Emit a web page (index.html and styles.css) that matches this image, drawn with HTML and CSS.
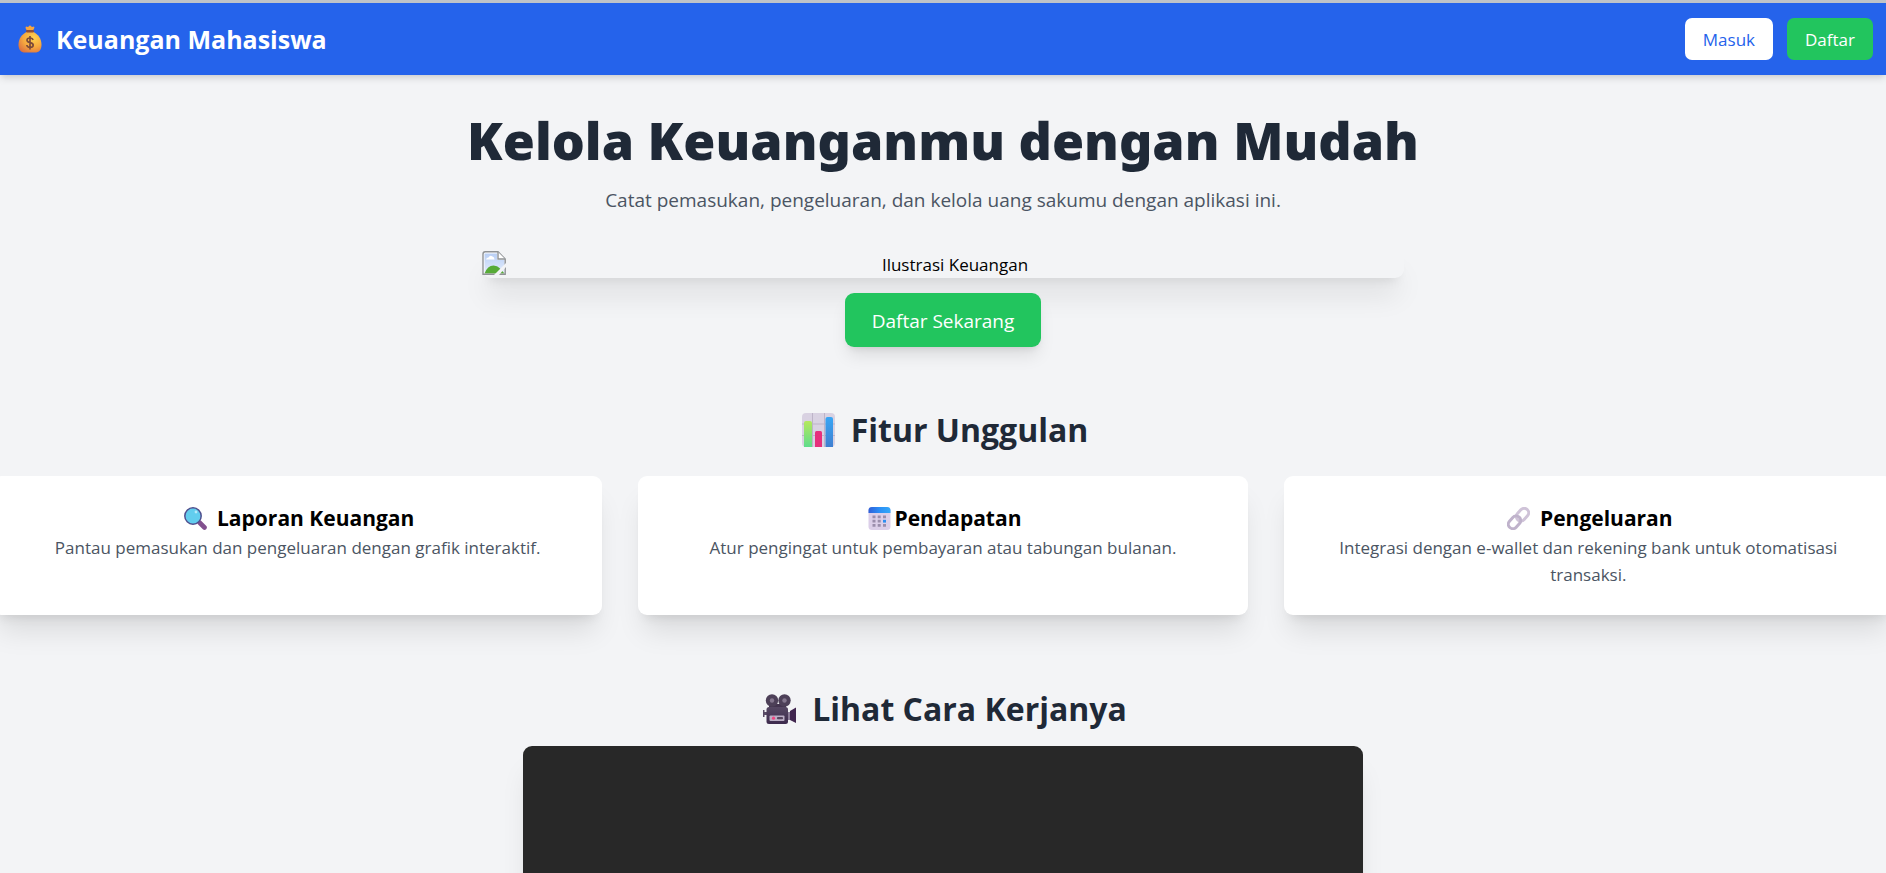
FILE: index.html
```html
<!DOCTYPE html>
<html lang="id">
<head>
<meta charset="utf-8">
<meta name="viewport" content="width=device-width, initial-scale=1">
<title>Keuangan Mahasiswa</title>
<link rel="stylesheet" href="styles.css">
</head>
<body>
<nav class="navbar">
  <p class="brand">
    <svg class="icon-brand" viewBox="0 0 24 28" aria-hidden="true">
      <defs><radialGradient id="bag" cx=".65" cy=".3" r=".8"><stop offset="0" stop-color="#ffd34f"/><stop offset=".55" stop-color="#f7a93f"/><stop offset="1" stop-color="#dc7141"/></radialGradient></defs>
      <path d="M8 1.500 10 2l2-1.700L14 2l2-.5c.8.8.3 2-.8 3.500L14.500 7h-5L8.700 5C7.500 3.500 7.200 2.200 8 1.500z" fill="#f6a640"/>
      <path d="M9 6.800C4 9 .5 14 .5 19.500c0 5.500 2.500 8 6.500 8h10c4 0 6.500-2.500 6.500-8C23.500 14 20 9 15 6.800z" fill="url(#bag)"/>
      <rect x="8" y="5" width="8" height="2.400" rx="1.200" fill="#8d4f3c"/>
      <path d="M15 15c-.3-1.500-1.500-2-3-2s-3 .7-3 2.300c0 3.200 6.200 1.500 6.200 4.700 0 1.600-1.500 2.400-3.200 2.400S9 21.500 8.800 20M12 11v13.500" fill="none" stroke="#7c4a3a" stroke-width="1.700"/>
    </svg>
    Keuangan Mahasiswa
  </p>
  <div class="nav-actions">
    <a class="btn btn-light" href="#masuk">Masuk</a>
    <a class="btn btn-green" href="#daftar">Daftar</a>
  </div>
</nav>

<main>
  <section class="hero">
    <h1>Kelola Keuanganmu dengan Mudah</h1>
    <p class="lead">Catat pemasukan, pengeluaran, dan kelola uang sakumu dengan aplikasi ini.</p>
    <div class="illustration">
      <svg class="icon-broken" viewBox="0 0 24 24" aria-hidden="true">
        <defs><linearGradient id="sky" x1="0" y1="0" x2="0" y2="1"><stop offset="0" stop-color="#b9cff5"/><stop offset="1" stop-color="#e3ecfc"/></linearGradient></defs>
        <path d="M1 23V3q0-2 2-2h13l7 7v15z" fill="#fff"/>
        <path d="M2.500 22V2.500H15V9h7.500v13z" fill="url(#sky)"/>
        <path d="M4 8.500q.5-2 2.500-2Q8 3.500 10.500 5.500q2 .5 2 3z" fill="#fff"/>
        <path d="M2.500 22.500q3-8 9-8 4 0 6 2.500l5 5.500z" fill="#57ab37"/>
        <path d="M12 23.200H1V3q0-2.200 2.200-2.200H16L23.200 8v15.200H12" fill="none" stroke="#8f9295" stroke-width="1.400"/>
        <path d="M16 1v7h7" fill="#fff" stroke="#8f9295" stroke-width="1.400"/>
        <path d="M12 24 24 12v4l-7 8z" fill="#f3f4f6"/>
      </svg>
      <span class="illustration-text">Ilustrasi Keuangan</span>
    </div>
    <a class="btn-cta" href="#daftar">Daftar Sekarang</a>
  </section>

  <section class="features">
    <h2>
      <svg class="icon-title" viewBox="0 0 33 34" aria-hidden="true">
        <defs>
          <linearGradient id="g1" x1="0" y1="0" x2="0" y2="1"><stop offset="0" stop-color="#b5e85c"/><stop offset="1" stop-color="#5fdc8c"/></linearGradient>
          <linearGradient id="g2" x1="0" y1="0" x2="0" y2="1"><stop offset="0" stop-color="#38a6f5"/><stop offset="1" stop-color="#3f7fd0"/></linearGradient>
        </defs>
        <rect width="33" height="34" rx="4" fill="#d9d2e2"/>
        <path d="M10.500 0v34M22.500 0v34M0 11h33M0 22.500h33" stroke="#bdb4c8" stroke-width="1"/>
        <path d="M2 34V10q0-2 2-2h4q2 0 2 2v24z" fill="url(#g1)"/>
        <path d="M13 34V19.500q0-1.500 1.500-1.500h4q1.500 0 1.500 1.500V34z" fill="#e6307c"/>
        <path d="M23.500 34V6q0-2 2-2H29q2 0 2 2v28z" fill="url(#g2)"/>
      </svg>
      Fitur Unggulan
    </h2>
    <div class="cards">
      <article class="card">
        <h3>
          <svg class="icon-card" viewBox="0 0 23 23" aria-hidden="true">
            <path d="m15.500 15.500 5 5" stroke="#82508e" stroke-width="4.600" stroke-linecap="round"/>
            <circle cx="9" cy="9" r="8.200" fill="#62cdee" stroke="#50508f" stroke-width="1.500"/>
            <circle cx="12" cy="5" r="1.400" fill="#b4e9fa"/>
          </svg>
          Laporan Keuangan
        </h3>
        <p>Pantau pemasukan dan pengeluaran dengan grafik interaktif.</p>
      </article>
      <article class="card">
        <h3 class="tight">
          <svg class="icon-card" viewBox="0 0 23 23" aria-hidden="true">
            <defs><linearGradient id="cal"><stop offset="0" stop-color="#2f5fd8"/><stop offset=".5" stop-color="#2b8ef5"/><stop offset="1" stop-color="#34a8f8"/></linearGradient></defs>
            <rect x=".5" y="0" width="22" height="23" rx="3.500" fill="#dccfe9"/>
            <path d="M.5 6V3.500Q.5 0 4 0h15q3.500 0 3.500 3.500V6z" fill="url(#cal)"/>
            <path d="M4.500 8.500h3v2.800h-3zm5.200 0h3v2.800h-3zm5.300 0h3v2.800h-3zM4.500 12.800h3v2.800h-3zm5.200 0h3v2.800h-3zM4.500 17h3v2.800h-3zm5.200 0h3v2.800h-3zm5.300 0h3v2.800h-3z" fill="#9b8eac"/>
            <path d="M15 12.800h3v2.800h-3z" fill="#2f8ff0"/>
          </svg>
          Pendapatan
        </h3>
        <p>Atur pengingat untuk pembayaran atau tabungan bulanan.</p>
      </article>
      <article class="card">
        <h3>
          <svg class="icon-card" viewBox="0 0 23 23" aria-hidden="true">
            <g fill="none" stroke-width="3">
              <rect x="8.500" y="3.200" width="14" height="9" rx="4.500" transform="rotate(-48 15.500 7.700)" stroke="#cfc3d8"/>
              <rect x=".5" y="10.800" width="14" height="9" rx="4.500" transform="rotate(-48 7.500 15.300)" stroke="#bfb2cb"/>
            </g>
          </svg>
          Pengeluaran
        </h3>
        <p>Integrasi dengan e-wallet dan rekening bank untuk otomatisasi transaksi.</p>
      </article>
    </div>
  </section>

  <section class="demo">
    <h2>
      <svg class="icon-title" viewBox="0 0 33 30" aria-hidden="true">
        <defs><linearGradient id="cam" x1="0" y1="0" x2="0" y2="1"><stop offset="0" stop-color="#564863"/><stop offset="1" stop-color="#3c2a4d"/></linearGradient></defs>
        <path d="M6 10h17v5H6z" fill="#43344f"/>
        <circle cx="9" cy="6.500" r="6.200" fill="#4d4058"/><circle cx="21.500" cy="6.500" r="6.200" fill="#4d4058"/>
        <circle cx="9" cy="6.500" r="2.200" fill="#85788f"/><circle cx="21.500" cy="6.500" r="2.200" fill="#85788f"/>
        <path d="M0 16h1.500v2H4v3H1.500v2H0z" fill="#584a65"/>
        <path d="M24 18h3v8h-3z" fill="#8b7c98"/>
        <path d="m27 17 6-3.500V29l-6-3z" fill="#41264f"/>
        <rect x="3.500" y="13" width="21.500" height="17" rx="2.500" fill="url(#cam)"/>
        <rect x="6.500" y="21.500" width="15" height="5.500" rx="1" fill="#baadc4"/>
        <circle cx="10.500" cy="24.200" r="1.600" fill="#f04580"/><path d="M15 24.200h4" stroke="#56455f" stroke-width="2.200" stroke-linecap="round"/>
      </svg>
      Lihat Cara Kerjanya
    </h2>
    <div class="video"></div>
  </section>
</main>
</body>
</html>
```
FILE: styles.css
```css
*, *::before, *::after { box-sizing: border-box; }

body {
  margin: 0;
  overflow-x: hidden;
  border-top: 3px solid #bfc3c8;
  background: #f3f4f6;
  color: #000;
  font-family: "Open Sans", "Noto Sans", sans-serif;
  font-size: 17px;
  line-height: 27px;
}

h1, h2, h3, p { margin: 0; }
a { text-decoration: none; }
svg { display: block; flex: none; }

.navbar {
  display: flex;
  align-items: center;
  justify-content: space-between;
  padding: 15px 13px 15px 18px;
  background: #2563eb;
  color: #fff;
  box-shadow: 0 5px 7px -1px rgba(0, 0, 0, .1), 0 2px 5px -2px rgba(0, 0, 0, .1);
}

.brand {
  display: flex;
  align-items: center;
  gap: 14px;
  font-size: 25px;
  line-height: 36px;
  font-weight: 700;
}

.icon-brand { width: 24px; height: 28px; }

.nav-actions { display: flex; gap: 14px; }

.btn {
  padding: 8px 18px 7px;
  border-radius: 7px;
}

.btn-light { background: #fff; color: #2563eb; }
.btn-green { background: #22c55e; color: #fff; }

.hero {
  display: flex;
  flex-direction: column;
  align-items: center;
  padding: 35px 18px 0;
  text-align: center;
}

h1 {
  color: #1f2937;
  font-family: "Noto Sans", sans-serif;
  font-size: 52px;
  line-height: 60px;
  font-weight: 900;
}

.lead {
  margin-top: 15px;
  color: #4b5563;
  font-size: 19px;
  line-height: 30px;
}

.illustration {
  display: flex;
  width: 50%;
  max-width: 922px;
  margin-top: 33px;
  padding: 3px 0 0;
  border-radius: 9px;
  box-shadow: 0 22px 28px -6px rgba(0, 0, 0, .1), 0 9px 11px -7px rgba(0, 0, 0, .1);
}

.icon-broken { width: 24px; height: 24px; }
.illustration-text { flex: 1; }

.btn-cta {
  margin-top: 15px;
  padding: 14px 27px 12px;
  border-radius: 9px;
  background: #22c55e;
  color: #fff;
  font-size: 19px;
  line-height: 28px;
  box-shadow: 0 11px 17px -3px rgba(0, 0, 0, .1), 0 5px 7px -4px rgba(0, 0, 0, .1);
}

h2 {
  display: flex;
  align-items: center;
  justify-content: center;
  gap: 16px;
  padding-left: 4px;
  color: #1f2937;
  font-size: 32px;
  line-height: 40px;
  font-weight: 700;
}

.icon-title { width: 33px; height: 34px; }

.features { padding-top: 63px; }

.cards {
  display: grid;
  grid-template-columns: repeat(3, 1fr);
  gap: 36px;
  margin: 26px -7px 0;
}

.card {
  padding: 27px 45px;
  border-radius: 9px;
  background: #fff;
  text-align: center;
  box-shadow: 0 22px 28px -6px rgba(0, 0, 0, .1), 0 9px 11px -7px rgba(0, 0, 0, .1);
}

h3 {
  display: flex;
  align-items: center;
  justify-content: center;
  gap: 10px;
  padding-left: 3px;
  font-size: 21px;
  line-height: 31px;
  font-weight: 700;
}

.tight { gap: 4px; }
.icon-card { width: 23px; height: 23px; }
.card p { color: #4b5563; }

.demo { padding-top: 74px; overflow: hidden; }

.video {
  max-width: 840px;
  height: 473px;
  margin: 17px auto 0;
  border-radius: 9px;
  background: #282828;
  box-shadow: 0 22px 28px -6px rgba(0, 0, 0, .1), 0 9px 11px -7px rgba(0, 0, 0, .1);
}
```
